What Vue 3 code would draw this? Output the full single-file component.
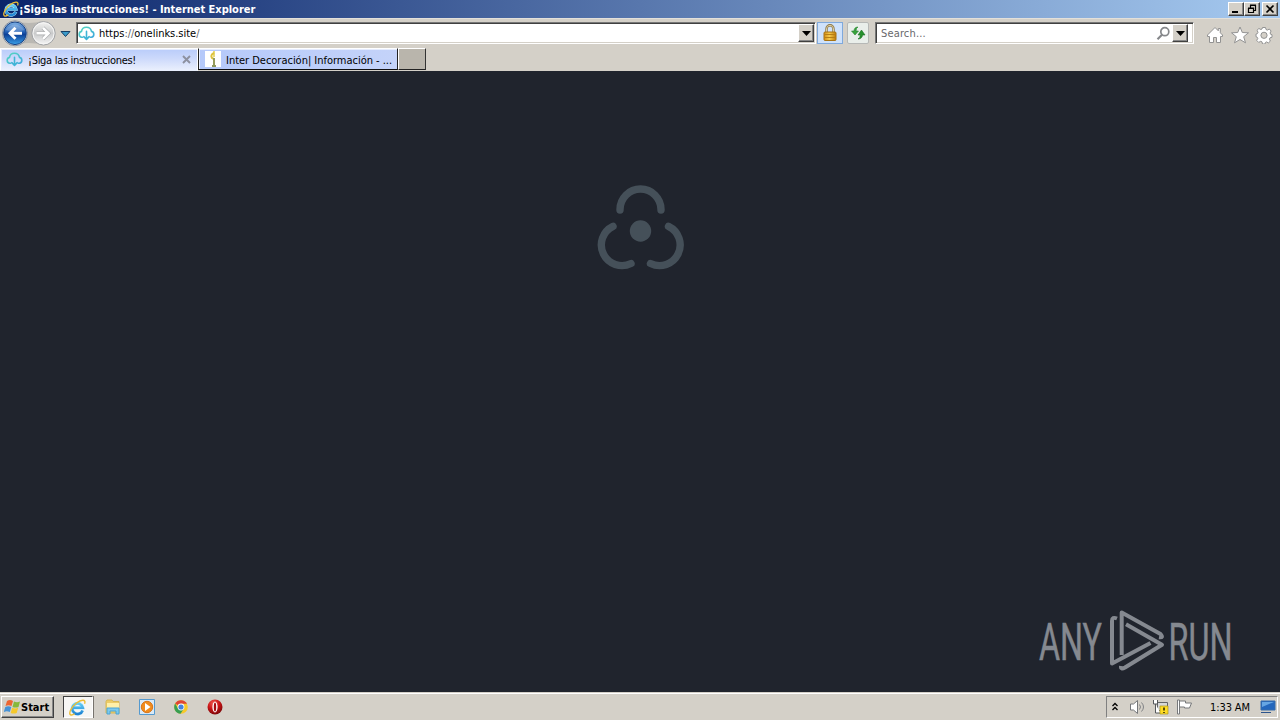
<script setup>
const tabs = [
  { title: '¡Siga las instrucciones!', active: true },
  { title: 'Inter Decoración| Información - ...', active: false },
]
</script>

<template>
  <div class="desktop">
    <svg class="defs" width="0" height="0">
      <defs>
        <linearGradient id="blueBtn" x1="0" y1="0" x2="0" y2="1">
          <stop offset="0" stop-color="#7fb0e4" /><stop offset=".42" stop-color="#2764b8" />
          <stop offset=".55" stop-color="#0d4198" /><stop offset="1" stop-color="#3aa0e8" />
        </linearGradient>
        <linearGradient id="greyBtn" x1="0" y1="0" x2="0" y2="1">
          <stop offset="0" stop-color="#f4f4f2" /><stop offset=".5" stop-color="#c9cacb" /><stop offset="1" stop-color="#f7f7f7" />
        </linearGradient>
        <linearGradient id="cloudInk" x1="0" y1="0" x2="1" y2="1">
          <stop offset="0" stop-color="#55d8bf" /><stop offset="1" stop-color="#3fa9dc" />
        </linearGradient>
        <linearGradient id="ieInk" x1="0" y1="0" x2="0" y2="1">
          <stop offset="0" stop-color="#62cdf5" /><stop offset="1" stop-color="#2082d2" />
        </linearGradient>
        <linearGradient id="gold" x1="0" y1="0" x2="1" y2="0">
          <stop offset="0" stop-color="#d48d12" /><stop offset=".45" stop-color="#f6ca4c" /><stop offset="1" stop-color="#bd7a0b" />
        </linearGradient>
        <radialGradient id="operaRed" cx=".4" cy=".25" r=".8">
          <stop offset="0" stop-color="#f05a50" /><stop offset=".5" stop-color="#c91416" /><stop offset="1" stop-color="#730406" />
        </radialGradient>
        <symbol id="cloud" viewBox="0 0 16 16">
          <g fill="none" stroke="url(#cloudInk)" stroke-width="1.500" stroke-linecap="round" stroke-linejoin="round">
            <path d="M4.500 11.500H3.500A2.800 2.800 0 0 1 3.300 6C4 .9 11.700.8 12.700 6A2.800 2.800 0 0 1 12.500 11.500h-1" />
            <path stroke="#3fb4d6" d="M8 6v7.500M5.500 11 8 13.500l2.500-2.500" />
          </g>
        </symbol>
        <symbol id="ie" viewBox="0 0 16 16">
          <path d="M12.800 10.800A5 5 0 1 1 13 8.200H4.200" fill="none" stroke="#b9e9fb" stroke-width="3.200" />
          <path d="M12.800 10.800A5 5 0 1 1 13 8.200H4.200" fill="none" stroke="url(#ieInk)" stroke-width="2.400" />
          <path d="M14.600 4.400C16.400.1 11.500.2 7 3.800 2.500 7.400-.6 13.200 1.300 14.700c1 .8 2.800 0 4-.8" fill="none" stroke="#edbd35" stroke-width="1.300" />
        </symbol>
      </defs>
    </svg>

    <header class="titlebar">
      <svg class="title-icon" width="16" height="16"><use href="#ie" /></svg>
      <span class="title-text">¡Siga las instrucciones! - Internet Explorer</span>
      <div class="window-buttons">
        <button><svg width="14" height="12"><path d="M3 9h6" stroke="#000" stroke-width="2" /></svg></button>
        <button><svg width="14" height="12"><path d="M5.500 5V2.500h5v5H8.500M5 2h6M3.500 5.500h5v4h-5zM3 5h6" fill="none" stroke="#000" stroke-width="1.200" /></svg></button>
        <button class="close"><svg width="14" height="12"><path d="m3.500 2.500 7 7m0-7-7 7" stroke="#000" stroke-width="1.700" /></svg></button>
      </div>
    </header>

    <nav class="navbar">
      <svg class="nav-buttons" width="74" height="30" viewBox="0 0 74 30">
        <path d="M14 2Q29 6 43 2V26Q29 22 14 26Z" fill="#bab8b3" />
        <circle cx="15" cy="14.300" r="12.500" fill="#eeeeec" stroke="#888f9b" />
        <circle cx="15" cy="14.300" r="11.300" fill="url(#blueBtn)" stroke="#174284" />
        <path d="M5.500 11Q15 0 24.500 11Q15 14 5.500 11Z" fill="#fff" opacity=".2" />
        <path d="M22 14.300H10m5.500-5.500L10 14.300l5.500 5.500" fill="none" stroke="#fff" stroke-width="2.900" />
        <circle cx="43.500" cy="14.300" r="11.700" fill="url(#greyBtn)" stroke="#a0a2a5" />
        <circle cx="43.500" cy="14.300" r="10.500" fill="none" stroke="#f6f6f5" />
        <path d="M36.500 14.300h12M43 8.800l5.500 5.500-5.500 5.500" fill="none" stroke="#a9abad" stroke-width="3.800" />
        <path d="M36.500 14.300h12M43 8.800l5.500 5.500-5.500 5.500" fill="none" stroke="#fff" stroke-width="2.600" />
        <path d="M61 12.500h9l-4.500 5z" fill="#3b9bc9" stroke="#183f65" />
      </svg>
      <div class="field address">
        <svg width="17" height="17"><use href="#cloud" /></svg>
        <span class="url">https<i>://</i>onelinks.site<i>/</i></span>
        <button class="drop"><svg width="9" height="5"><path d="M0 0h9L4.500 5z" /></svg></button>
      </div>
      <div class="lock">
        <svg width="18" height="20" viewBox="0 0 18 20">
          <path d="M5.500 9V6a3.500 3.700 0 0 1 7 0v3" fill="none" stroke="#8b7444" stroke-width="2.400" />
          <path d="M5.500 9V6a3.500 3.700 0 0 1 7 0v3" fill="none" stroke="#e3d8ac" stroke-width=".9" />
          <rect x="3" y="9" width="12" height="8.500" rx="1" fill="url(#gold)" stroke="#a87312" />
          <path d="M3.500 11.500h11M3.500 14.500h11" stroke="#b77f15" />
        </svg>
      </div>
      <div class="refresh">
        <svg width="18" height="18" viewBox="0 0 18 18">
          <path d="M9 3C6 3 5 5 5 7H2.500L6 11l3.500-4H7q0-3 2-4z" fill="#38a33c" stroke="#268330" stroke-width=".6" />
          <path d="M9 15c3 0 4.500-2 4.500-4H16l-3.500-5L9 11h2.300q0 3-2.300 4z" fill="#27912e" stroke="#177020" stroke-width=".6" />
        </svg>
      </div>
      <div class="field search">
        <span>Search...</span>
        <svg width="15" height="15" viewBox="0 0 15 15"><circle cx="8.800" cy="5.700" r="4" fill="#fff" stroke="#85878a" stroke-width="1.700" /><path d="m6 8.800-4.500 4.500" stroke="#85878a" stroke-width="2.200" /></svg>
        <button class="drop"><svg width="9" height="5"><path d="M0 0h9L4.500 5z" /></svg></button>
      </div>
      <div class="commands">
        <svg width="18" height="18" viewBox="0 0 18 18"><path d="M9 1.500 1.500 9v1.500h2v6h4v-5h3v5h4v-6h2V9l-2.200-2.200V2.500h-2v2.300z" fill="#fff" stroke="#929292" /></svg>
        <svg width="18" height="18" viewBox="0 0 18 18"><path d="m9 1 2.300 5.500 6.200.3-4.800 3.900 1.800 6.100L9 13.500l-5.500 3.300 1.800-6.100L.500 6.800l6.200-.3z" fill="#fff" stroke="#929292" /></svg>
        <svg width="18" height="18" viewBox="0 0 18 18">
          <path d="M7.500 1.500h3l.5 2 1.300.6 2-1.100 1.800 2-1 2 .5 1.300 1.400.4v2.600l-2 .5-.6 1.300 1 2-2 1.800-2-1-1 .6-.4 1.500H7.500L7 15.900 5.700 15.300l-2 1.100-2-2 1.100-2-.6-1.200L1 10.700V8.100l1.400-.5L3 6.300l-1-2 1.900-1.800 2 1L7 3z" fill="#fff" stroke="#929292" />
          <circle cx="9" cy="9.300" r="3.100" fill="#d4d0c8" stroke="#929292" />
        </svg>
      </div>
    </nav>

    <div class="tabs">
      <div v-for="tab in tabs" :key="tab.title" class="tab" :class="{ active: tab.active }">
        <svg v-if="tab.active" width="17" height="17"><use href="#cloud" /></svg>
        <svg v-else width="16" height="16" viewBox="0 0 16 16">
          <path d="M0 0h16v16H0z" fill="#fff" />
          <path d="M9 0v6" stroke="#eada76" stroke-width="2" /><path d="M9 2Q5 4 7 7l2 1v6" fill="none" stroke="#dcc23d" stroke-width="2" />
          <path d="M9 7v8M7 15h4" stroke="#8e9860" stroke-width="1.800" />
        </svg>
        <span>{{ tab.title }}</span>
        <svg v-if="tab.active" class="tab-close" width="9" height="9"><path d="m1 1 7 7m0-7-7 7" stroke="#8d91a0" stroke-width="1.900" /></svg>
      </div>
      <div class="new-tab"></div>
    </div>

    <main class="page">
      <svg class="loader" width="100" height="100" viewBox="590 176 100 100">
        <g fill="none" stroke="#455059" stroke-width="7.400" stroke-linecap="round">
          <path d="M620 210V209.500A20.500 20.500 0 0 1 661 209.500V210" />
          <path d="M613 226.300A20.600 20.600 0 0 0 631 263.500" />
          <path d="M668.500 226.300A20.600 20.600 0 0 1 650.500 263.500" />
        </g>
        <circle cx="640.500" cy="231" r="10.700" fill="#455059" />
      </svg>
      <svg class="watermark" width="200" height="70" viewBox="1035 606 200 70">
        <g class="brand">
          <text x="1039" y="660" textLength="63" lengthAdjust="spacingAndGlyphs">ANY</text>
          <text x="1168.500" y="660" textLength="64" lengthAdjust="spacingAndGlyphs">RUN</text>
        </g>
        <g fill="none" stroke="#858990" stroke-width="4" stroke-linejoin="round">
          <path d="M1117 618.500Q1112 616.500 1112 621V663.500L1150.500 643" />
          <path d="M1121.700 655V612.500L1160.500 634Q1164 638 1159 637.200" />
          <path d="M1126 624.300L1162 644.800L1125 667.500Q1120.500 670 1121 666" />
        </g>
      </svg>
    </main>

    <footer class="taskbar">
      <button class="start">
        <svg width="17" height="16" viewBox="0 0 17 16">
          <path d="M3 2q3-2 6 0L7.500 7q-3-1.500-6 0z" fill="#ed6531" /><path d="M10 2.500q3 1.500 6 0L14.500 8q-3 1.200-6 0z" fill="#86b83b" />
          <path d="M1.300 8q3-1.500 6 0L5.800 13q-3-1.500-6 0z" fill="#4692d6" /><path d="M8.200 8.800q3 1.500 6 0L12.700 14q-3 1.200-6 0z" fill="#f5c82b" />
        </svg>
        <span>Start</span>
      </button>
      <div class="task running"><svg width="17" height="17"><use href="#ie" /></svg></div>
      <div class="launchers">
        <svg width="18" height="18" viewBox="0 0 18 18">
          <path d="M2 3.500 3 2h5l1 1.500h6V15H2z" fill="#edcc68" stroke="#d7b856" /><path d="M3 5h12v6H3z" fill="#fff0a9" />
          <path d="M3 16v-6h12v6h-3v-3H6v3z" fill="#7cc9ed" stroke="#4ba4d5" />
        </svg>
        <svg width="18" height="18" viewBox="0 0 18 18">
          <path d="M1.500 1.500h15v15h-15z" fill="#d9e9f6" stroke="#559acf" /><circle cx="9" cy="9" r="5.700" fill="#f18b1c" stroke="#d8751b" /><path d="m7 5 5.500 4L7 13z" fill="#fff" />
        </svg>
        <svg width="18" height="18" viewBox="0 0 18 18">
          <circle cx="9" cy="9" r="6.800" fill="#f7c92a" /><path d="M9 9 3.100 5.600A6.800 6.800 0 0 1 15 5.800H9z" fill="#df4436" /><path d="M3.100 5.600A6.800 6.800 0 0 0 8.500 15.800L12 10.500H6z" fill="#389e52" /><circle cx="9" cy="9" r="3.400" fill="#fff" /><circle cx="9" cy="9" r="2.600" fill="#4583df" />
        </svg>
        <svg width="18" height="18" viewBox="0 0 18 18">
          <circle cx="9" cy="9" r="7.500" fill="url(#operaRed)" /><ellipse cx="9" cy="9" rx="2.600" ry="5.400" fill="#fff" /><ellipse cx="9" cy="9" rx="1.200" ry="4.600" fill="#a60c10" />
        </svg>
      </div>
      <div class="tray">
        <svg width="8" height="10" viewBox="0 0 8 10"><path d="m1.500 4 2.500-2.500L6.500 4m-5 4L4 5.500 6.500 8" fill="none" stroke="#000" stroke-width="1.300" /></svg>
        <svg class="sound" width="17" height="16" viewBox="0 0 17 16"><path d="M1.500 5h3l4-3.500v13l-4-3.500h-3z" fill="#fff" stroke="#75777a" /><path d="M10.500 5.500q2 2.500 0 5m2-7q4 4.500 0 9" fill="none" stroke="#808285" /></svg>
        <svg class="network" width="17" height="16" viewBox="0 0 17 16">
          <path d="M5.500 3.500h10v8h-10z" fill="#d7d8d8" stroke="#626568" /><path d="M1.500 1v4h4V1M3.500 5v9h5" fill="#fff" stroke="#55595c" />
          <path d="M8 7h8v8H8z" fill="#ffdc24" stroke="#ad9519" stroke-width=".7" /><path d="M12 8.500v3M12 13v1" stroke="#232000" stroke-width="1.500" />
        </svg>
        <svg class="flag" width="17" height="16" viewBox="0 0 17 16"><path d="M1.500 1v14h2V1z" fill="#fff" stroke="#77797b" /><path d="M3.500 2h6v2h6l-2 5h-5V8h-5z" fill="#fff" stroke="#77797b" /></svg>
        <span class="clock">1:33 AM</span>
        <svg class="monitor" width="16" height="14" viewBox="0 0 16 14"><path d="M1 1h14v9H1z" fill="#2467bc" stroke="#376caa" /><path d="M2 2h12L2 7z" fill="#66a6e3" /><path d="M1 12.500h10" stroke="#2c548c" /></svg>
      </div>
    </footer>
  </div>
</template>

<style>
body { margin: 0; overflow: hidden; }
</style>

<style scoped>
* { box-sizing: border-box; }
svg { display: block; flex: none; }
button { padding: 0; font: inherit; color: inherit; }
.defs { position: absolute; }
.desktop { width: 1280px; height: 720px; display: flex; flex-direction: column; background: #d4d0c8; font: 11px/14px "DejaVu Sans Condensed", "DejaVu Sans", sans-serif; font-stretch: condensed; color: #000; white-space: nowrap; }
.titlebar { height: 18px; flex: none; display: flex; align-items: center; padding: 0 2px 0 3px; background: linear-gradient(90deg, #0a246a, #a6caf0); color: #fff; font-weight: bold; }
.title-text { width: 240px; padding-top: 1px; letter-spacing: -.03px; }
.window-buttons { margin-left: auto; display: flex; }
.window-buttons button { width: 16px; height: 14px; display: flex; align-items: center; justify-content: center; background: #d4d0c8; border: 1px solid; border-color: #fff #404040 #404040 #fff; box-shadow: inset -1px -1px #888; }
.window-buttons .close { margin-left: 2px; }
.navbar { height: 30px; flex: none; display: flex; align-items: flex-start; border-top: 1px solid #e3e0da; }
.nav-buttons { margin-right: 2px; }
.field { height: 22px; margin-top: 3px; display: flex; align-items: center; background: #fff; border: 1px solid; border-color: #777 #fff #fff #777; box-shadow: inset 1px 1px #404040, inset -1px -1px #d4d0c8; }
.address { width: 740px; padding: 0 1px 0 1px; }
.url { margin-left: 4px; padding-top: 2px; letter-spacing: -.02px; }
.url i { font-style: normal; color: #666; }
.drop { width: 16px; height: 18px; margin-left: auto; display: flex; align-items: center; justify-content: center; background: #d4d0c8; border: 1px solid; border-color: #fff #404040 #404040 #fff; box-shadow: inset -1px -1px #888; }
.lock { width: 26px; height: 22px; margin: 3px 0 0 1px; padding-right: 1px; display: flex; align-items: center; justify-content: center; background: #cfe2fb; border: 1px solid #7fa9dc; }
.refresh { width: 22px; height: 22px; margin: 3px 0 0 4px; display: flex; align-items: center; justify-content: center; background: #e9eeea; border: 1px solid #b6b8b6; border-radius: 2px; }
.search { width: 319px; margin-left: 6px; padding: 0 5px 0 5px; color: #68686b; }
.search span { padding-top: 2px; letter-spacing: .15px; }
.search > svg { margin-left: auto; }
.search .drop { width: 16px; margin-left: 1px; margin-right: 0; }
.commands { display: flex; gap: 7px; margin: 7px 0 0 12px; }
.commands svg:nth-child(n+2) { margin-left: -.5px; }
.tabs { height: 23px; flex: none; display: flex; align-items: flex-start; }
.tab { width: 200px; height: 22px; display: flex; align-items: center; padding-left: 6px; background: linear-gradient(90deg, #b5c9fa, #c4d3f9); border: 1px solid; border-color: #fff #222 #111 #222; box-shadow: inset 1px 1px #e6edff; }
.tab span { margin-left: 5px; padding-top: 3px; letter-spacing: -.02px; }
.tab.active { width: 198px; height: 23px; background: linear-gradient(#b9ccfa, #ccd9fb 45%, #e9effd); border-color: #fff #fff #e9effd; padding-left: 5px; }
.tab.active span { padding-top: 2px; letter-spacing: -.3px; }
.tab-close { margin-left: auto; margin-right: 6px; }
.new-tab { width: 28px; height: 22px; background: #b9b5ac; border: 1px solid; border-color: #fff #333 #222 #fff; }
.page { height: 621px; flex: none; display: flex; flex-direction: column; background: #20242d; }
.loader { margin: 105px 0 0 590px; }
.watermark { margin: auto 45px 16px auto; overflow: visible; }
.brand { fill: #858990; stroke: #858990; stroke-width: .5px; font: 400 51px Roboto, sans-serif; }
.taskbar { height: 28px; flex: none; display: flex; align-items: flex-start; padding: 3px 2px 0 1px; border-top: 1px solid #d4d0c8; box-shadow: inset 0 1px #fff; }
.start { width: 53px; height: 22px; display: flex; align-items: center; gap: 0; padding-left: 2px; background: #d4d0c8; border: 1px solid; border-color: #fff #404040 #404040 #fff; box-shadow: inset -1px -1px #888; font-weight: bold; }
.start span { padding-top: 1px; letter-spacing: 0; }
.task { width: 30px; height: 22px; margin-left: 9px; margin-right: 1px; padding-right: 2px; display: flex; align-items: center; justify-content: center; background: #f7f6f4; border: 1px solid; border-color: #404040 #fff #fff #404040; box-shadow: 1px 0 #77736d; }
.launchers { display: flex; gap: 16px; margin: 2px 0 0 10px; }
.tray { width: 172px; height: 22px; margin-left: auto; display: flex; align-items: center; padding-left: 4px; border: 1px solid; border-color: #808080 #fff #fff #808080; }
.sound { margin-left: 10px; }
.network { margin-left: 6px; }
.flag { margin-left: 7px; }
.clock { width: 42px; margin-left: 17px; padding-top: 1px; letter-spacing: -.1px; }
.monitor { margin-left: 8px; }
</style>
